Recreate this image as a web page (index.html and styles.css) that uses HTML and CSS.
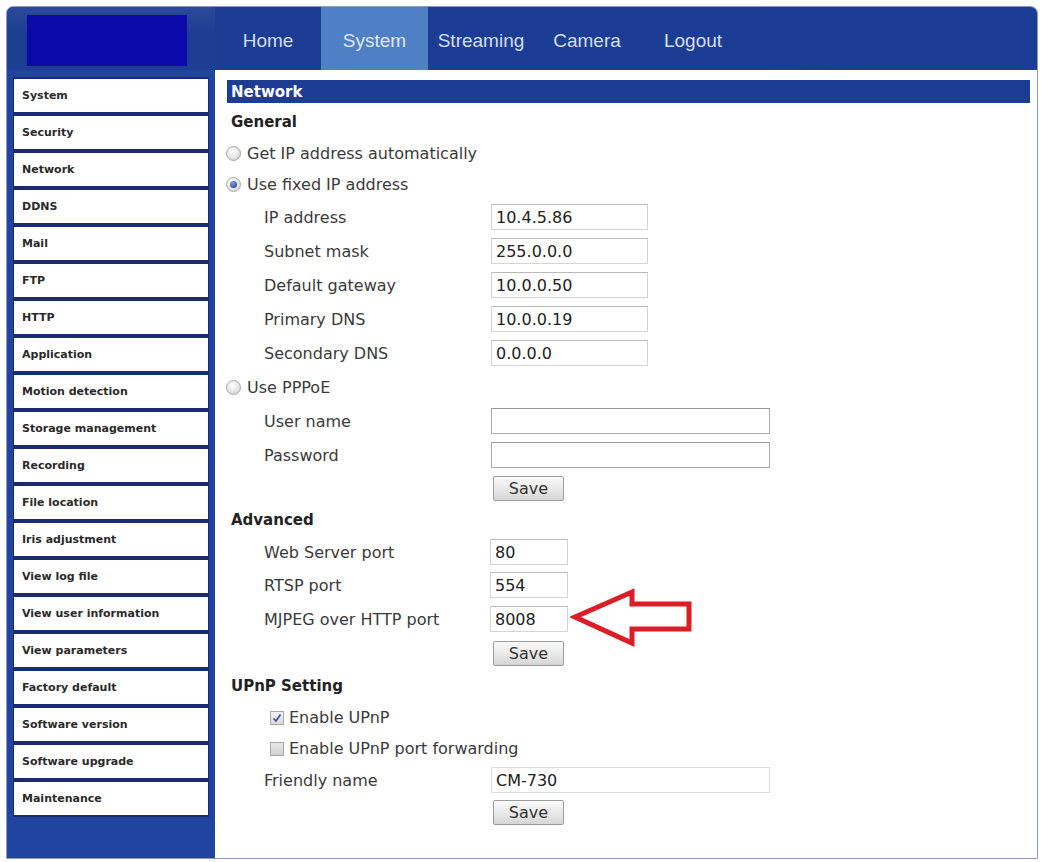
FILE: index.html
```html
<!DOCTYPE html>
<html lang="en">
<head>
    <meta charset="UTF-8">
    <title>Network</title>
    <link rel="stylesheet" href="styles.css">
</head>
<body>
<div class="frame">
    <div class="topbar">
        <div class="logo-cell"><div class="logo"></div></div>
        <div class="nav">
            <a class="nav-item">Home</a>
            <a class="nav-item active">System</a>
            <a class="nav-item">Streaming</a>
            <a class="nav-item">Camera</a>
            <a class="nav-item">Logout</a>
        </div>
    </div>
    <div class="main">
        <div class="sidebar">
            <div class="menu-item">System</div>
            <div class="menu-item">Security</div>
            <div class="menu-item">Network</div>
            <div class="menu-item">DDNS</div>
            <div class="menu-item">Mail</div>
            <div class="menu-item">FTP</div>
            <div class="menu-item">HTTP</div>
            <div class="menu-item">Application</div>
            <div class="menu-item">Motion detection</div>
            <div class="menu-item">Storage management</div>
            <div class="menu-item">Recording</div>
            <div class="menu-item">File location</div>
            <div class="menu-item">Iris adjustment</div>
            <div class="menu-item">View log file</div>
            <div class="menu-item">View user information</div>
            <div class="menu-item">View parameters</div>
            <div class="menu-item">Factory default</div>
            <div class="menu-item">Software version</div>
            <div class="menu-item">Software upgrade</div>
            <div class="menu-item">Maintenance</div>
        </div>
        <div class="content">
            <div class="section-bar">Network</div>
            <div class="form">
                <div class="row heading">General</div>
                <div class="row short"><span class="radio"></span>Get IP address automatically</div>
                <div class="row short"><span class="radio on"></span>Use fixed IP address</div>
                <div class="row field"><span class="label">IP address</span><span class="input ip">10.4.5.86</span></div>
                <div class="row field"><span class="label">Subnet mask</span><span class="input ip">255.0.0.0</span></div>
                <div class="row field"><span class="label">Default gateway</span><span class="input ip">10.0.0.50</span></div>
                <div class="row field"><span class="label">Primary DNS</span><span class="input ip">10.0.0.19</span></div>
                <div class="row field"><span class="label">Secondary DNS</span><span class="input ip">0.0.0.0</span></div>
                <div class="row"><span class="radio"></span>Use PPPoE</div>
                <div class="row field"><span class="label">User name</span><span class="input wide"></span></div>
                <div class="row field"><span class="label">Password</span><span class="input wide"></span></div>
                <div class="row heading field"><span class="label"></span><button class="save">Save</button></div>

                <div class="row heading">Advanced</div>
                <div class="row heading field"><span class="label">Web Server port</span><span class="input port">80</span></div>
                <div class="row field"><span class="label">RTSP port</span><span class="input port">554</span></div>
                <div class="row field"><span class="label">MJPEG over HTTP port</span><span class="input port">8008</span></div>
                <div class="row field"><span class="label"></span><button class="save">Save</button></div>

                <div class="row heading">UPnP Setting</div>
                <div class="row short check-row"><span class="check on"><svg width="12" height="12" viewBox="0 0 12 12"><path d="M2.5 6.5 L5 9 L9.5 2.5" fill="none" stroke="#3a4a9a" stroke-width="1.6"/></svg></span>Enable UPnP</div>
                <div class="row short check-row"><span class="check"></span>Enable UPnP port forwarding</div>
                <div class="row short field"><span class="label">Friendly name</span><span class="input wide light">CM-730</span></div>
                <div class="row short field"><span class="label"></span><button class="save">Save</button></div>
            </div>
            <svg class="arrow" width="124" height="62" viewBox="0 0 124 62">
                <polygon points="5,30 62,5 62,17 119,17 119,42 62,42 62,56" fill="#fff" stroke="#dc1d27" stroke-width="5" stroke-linejoin="miter"/>
            </svg>
        </div>
    </div>
</div>
</body>
</html>
```

FILE: styles.css
```css
body {
    margin: 0;
    background: #ffffff;
    font-family: "DejaVu Sans", Verdana, sans-serif;
    color: #3a3a3a;
}

.frame {
    margin: 6px 0 0 6px;
    width: 1030px;
    height: 851px;
    border: 1px solid #8f9bb8;
    border-radius: 7px 7px 0 0;
    overflow: hidden;
    display: flex;
    flex-direction: column;
}

.topbar {
    height: 63px;
    display: flex;
    background: linear-gradient(90deg, #243f92 0%, #1d3d94 20%, #1c3d95 100%);
    flex-shrink: 0;
}

.logo-cell {
    width: 208px;
    padding: 8px 0 0 20px;
    box-sizing: border-box;
    background: linear-gradient(180deg, #2c4a9a 0%, #1e3e93 40%);
}

.logo {
    width: 160px;
    height: 51px;
    background: #0b0bab;
}

.nav {
    display: flex;
}

.nav-item {
    width: 106px;
    display: flex;
    align-items: center;
    justify-content: center;
    padding-top: 4px;
    box-sizing: border-box;
    font-family: "Liberation Sans", Arial, sans-serif;
    font-size: 19px;
    color: #d3def2;
    cursor: pointer;
}

.nav-item.active {
    width: 107px;
    background: #4f80c6;
    color: #dfe8f7;
}

.main {
    flex: 1;
    display: flex;
}

.sidebar {
    width: 208px;
    background: #2144a0;
    padding: 7px 6px 0 6px;
    box-sizing: border-box;
    flex-shrink: 0;
}

.menu-item {
    height: 33px;
    border: 2px solid #1a2c70;
    border-left-width: 1px;
    border-right-width: 1px;
    background: #fff;
    display: flex;
    align-items: center;
    padding-left: 8px;
    font-size: 11px;
    font-weight: bold;
    color: #2a2a2a;
}

.content {
    flex: 1;
    background: #fff;
    position: relative;
}

.section-bar {
    margin: 10px 7px 0 12px;
    height: 23px;
    background: #1c3d93;
    color: #fff;
    font-weight: bold;
    font-size: 15px;
    display: flex;
    align-items: center;
    padding-left: 4px;
}

.form {
    padding: 3px 0 0 11px;
    font-size: 16px;
}

.row {
    height: 34px;
    display: flex;
    align-items: center;
}

.row.short {
    height: 31px;
}

.row.heading {
    height: 32px;
}

.heading {
    font-weight: bold;
    font-size: 15px;
    color: #222;
    padding-left: 5px;
}

.heading.field {
    font-weight: normal;
    font-size: 16px;
    color: #3a3a3a;
    padding-left: 0;
}

.row.short.field {
    height: 32px;
}

.label {
    width: 227px;
    padding-left: 38px;
    box-sizing: border-box;
    flex-shrink: 0;
    margin-right: 38px;
}

.field .label {
    width: 265px;
    margin-right: 0;
}

.radio {
    width: 13px;
    height: 13px;
    border-radius: 50%;
    border: 1px solid #a8a8a8;
    background: radial-gradient(circle at 40% 35%, #ffffff 0%, #e2e2e2 60%, #c4c4c4 100%);
    margin-right: 6px;
    position: relative;
    flex-shrink: 0;
}

.radio.on::after {
    content: "";
    position: absolute;
    left: 3px;
    top: 3px;
    width: 7px;
    height: 7px;
    border-radius: 50%;
    background: radial-gradient(circle at 40% 35%, #8aa0d8 0%, #2f4590 80%);
}

.check-row {
    padding-left: 44px;
}

.check {
    width: 14px;
    height: 14px;
    border: 1px solid #a9a9a9;
    background: linear-gradient(180deg, #e8e8e8, #d0d0d0);
    margin-right: 5px;
    display: flex;
    align-items: center;
    justify-content: center;
    box-sizing: border-box;
}

.check.on {
    background: linear-gradient(180deg, #f0f0f0, #dadada);
}

.input {
    height: 26px;
    box-sizing: border-box;
    border: 1px solid #d4d4d4;
    border-top-color: #b9b9b9;
    display: flex;
    align-items: center;
    padding-left: 4px;
    color: #222;
    background: #fff;
}

.input.ip {
    width: 157px;
}

.input.port {
    width: 78px;
    margin-left: -1px;
}

.input.wide {
    width: 279px;
    border-color: #aaa;
    border-top-color: #999;
}

.input.wide.light {
    border-color: #ddd;
}

.save {
    width: 71px;
    height: 25px;
    margin-left: 2px;
    border: 1px solid #9c9c9c;
    border-radius: 2px;
    background: linear-gradient(180deg, #fafafa 0%, #e9e9e9 50%, #d6d6d6 100%);
    font-family: "DejaVu Sans", Verdana, sans-serif;
    font-size: 16px;
    color: #333;
    padding: 0;
}

.arrow {
    position: absolute;
    left: 355px;
    top: 517px;
}
```
